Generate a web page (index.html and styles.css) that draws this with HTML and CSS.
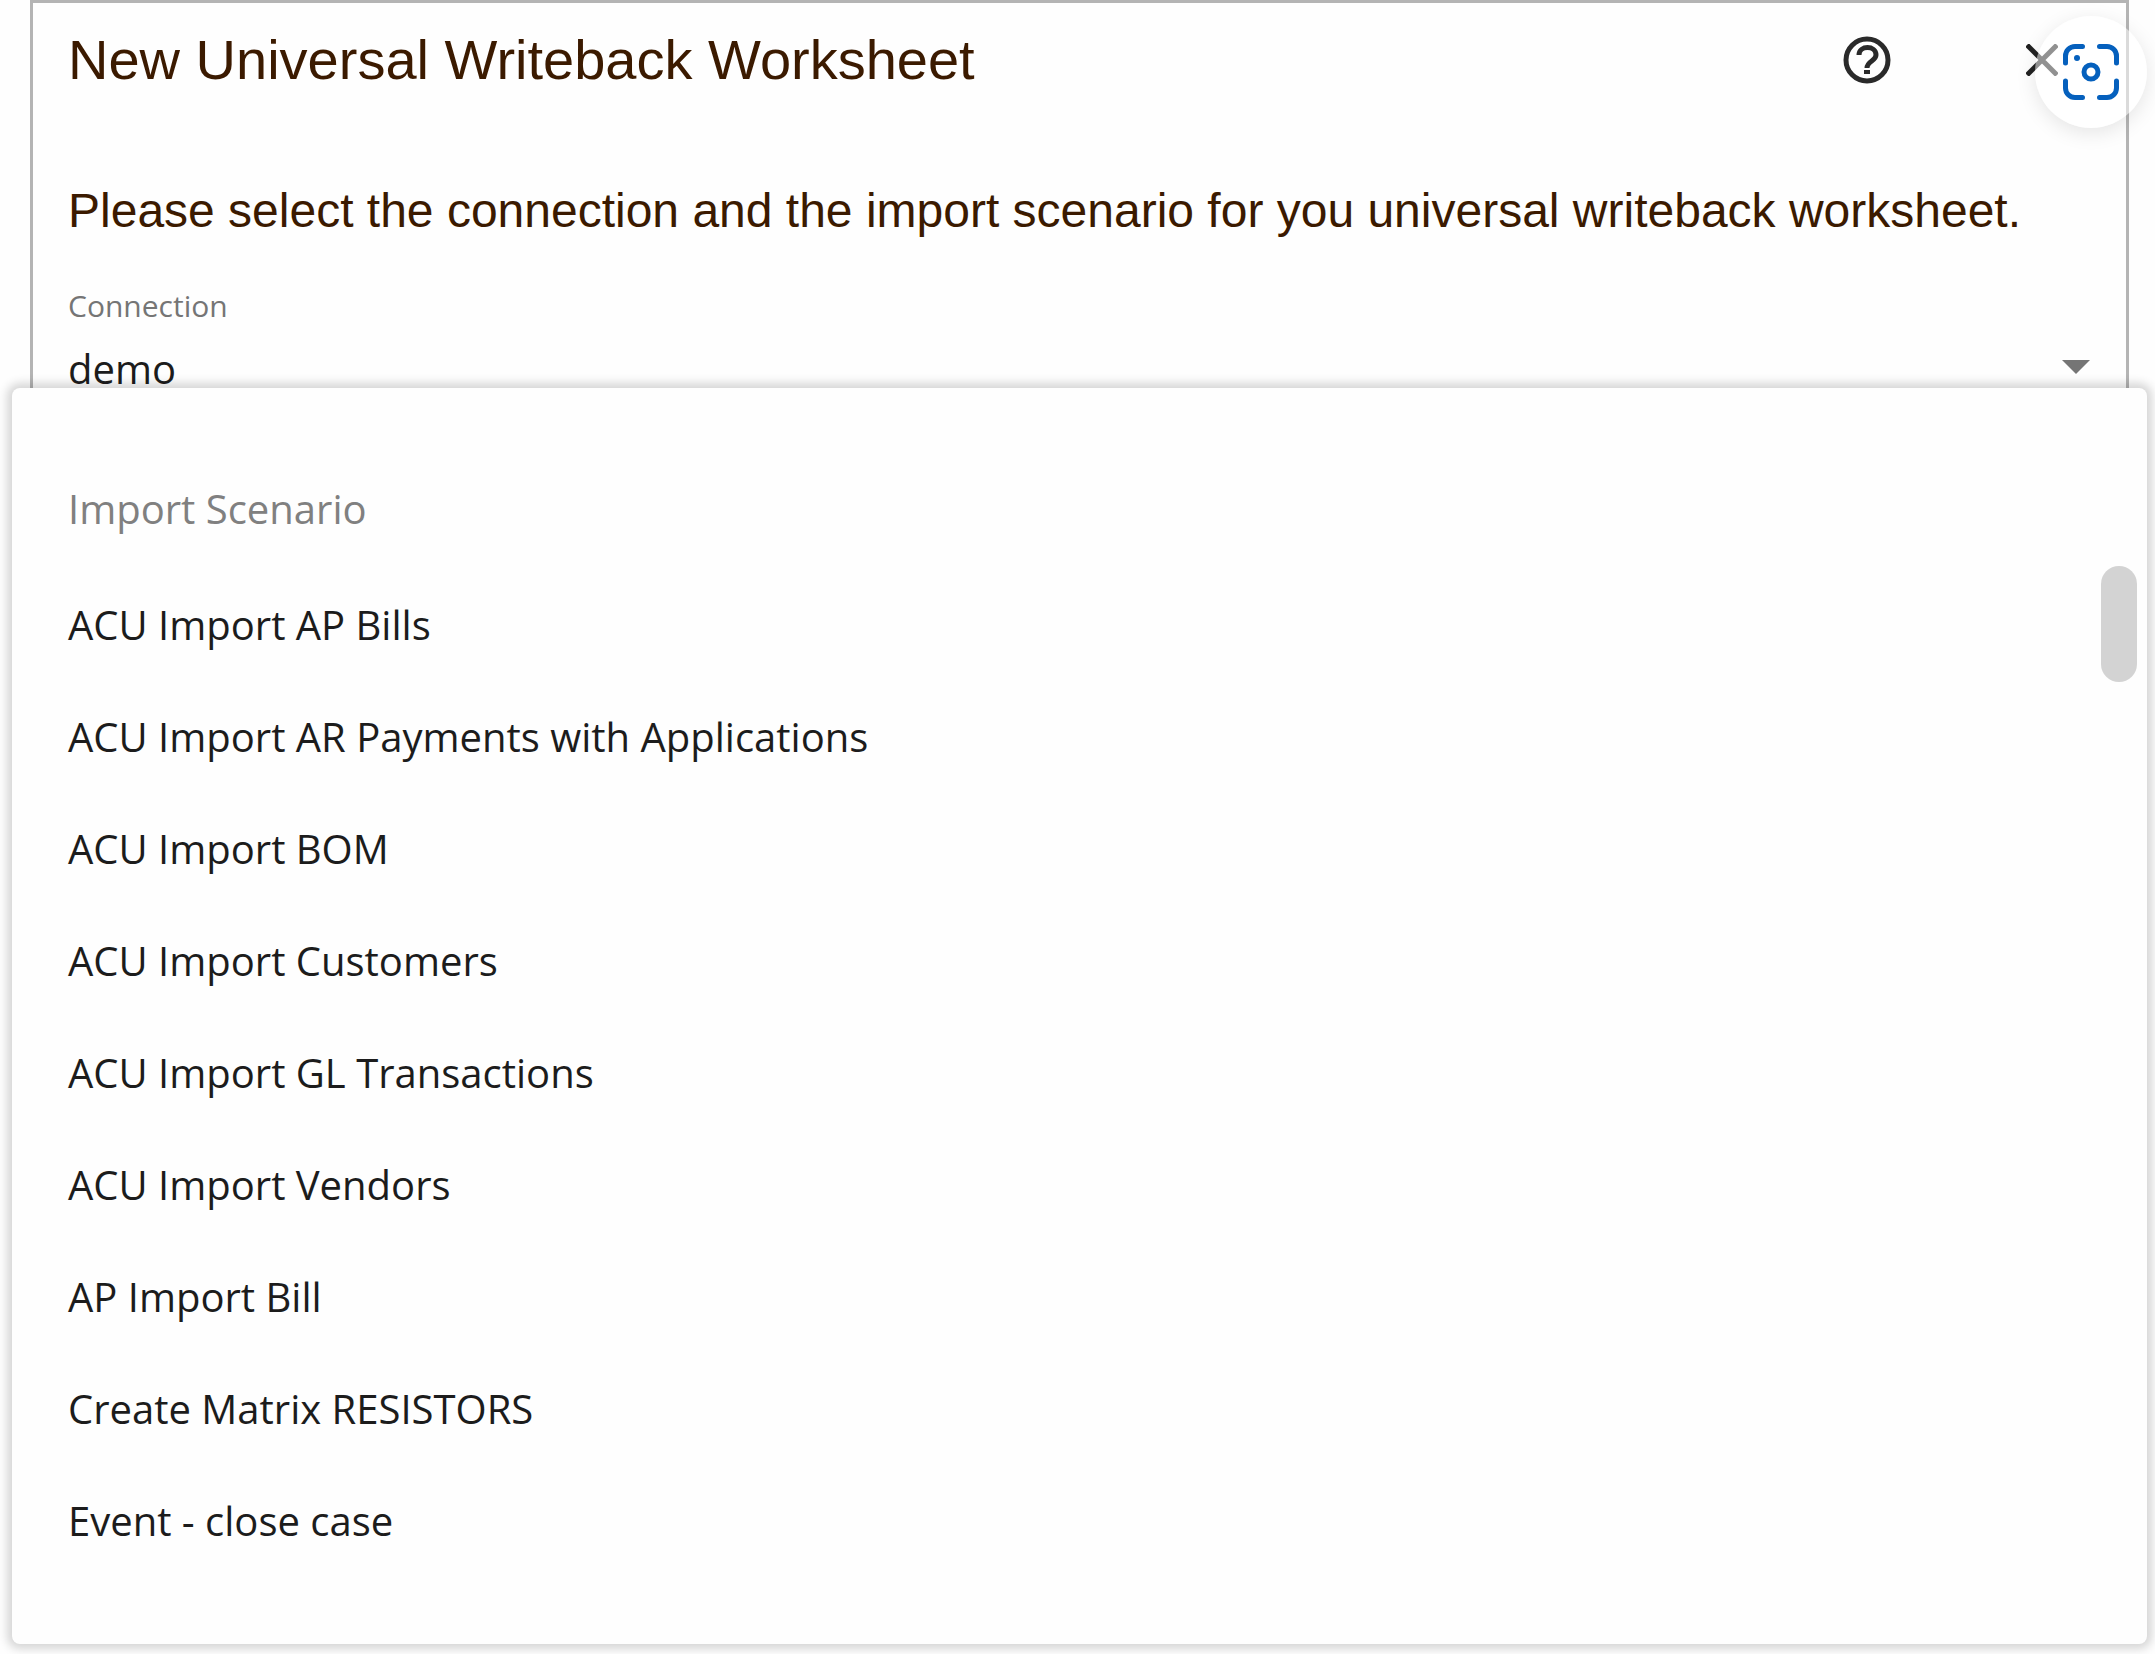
FILE: index.html
```html
<!DOCTYPE html>
<html lang="en">
<head>
    <meta charset="UTF-8">
    <meta name="viewport" content="width=device-width, initial-scale=1.0">
    <title>New Universal Writeback Worksheet</title>
    <link rel="stylesheet" href="styles.css">
</head>
<body>
    <main class="page">
        <form class="dialog">
            <header class="dialog-header">
                <h1>New Universal Writeback Worksheet</h1>
                <button type="button" class="icon-button help" aria-label="Help">
                    <svg viewBox="0 0 48 48" width="48" height="48" fill="none" stroke="#2a2a2a">
                        <circle cx="24" cy="24" r="21" stroke-width="5"/>
                        <path d="M16 19c0-10 17-10 17 0 0 6-9 6-9 13" stroke-width="5"/>
                        <path d="M24 34v4" stroke-width="6"/>
                    </svg>
                </button>
                <button type="button" class="icon-button close" aria-label="Close">
                    <svg viewBox="0 0 32 32" width="32" height="32" fill="none" stroke="#222" stroke-width="5">
                        <path d="M1 1l30 30M31 1L1 31"/>
                    </svg>
                </button>
            </header>
            <p class="intro">Please select the connection and the import scenario for you universal writeback worksheet.</p>
            <label for="connection">Connection</label>
            <div class="select-box">
                <select id="connection" name="connection">
                    <option>demo</option>
                </select>
                <svg class="arrow" viewBox="0 0 28 14" width="28" height="14">
                    <path d="M0 0h28L14 14z" fill="#757575"/>
                </svg>
            </div>
        </form>

        <section class="menu">
            <h2 id="scenarioLabel">Import Scenario</h2>
            <ul class="scenarios" aria-labelledby="scenarioLabel">
                <li><button type="button">ACU Import AP Bills</button></li>
                <li><button type="button">ACU Import AR Payments with Applications</button></li>
                <li><button type="button">ACU Import BOM</button></li>
                <li><button type="button">ACU Import Customers</button></li>
                <li><button type="button">ACU Import GL Transactions</button></li>
                <li><button type="button">ACU Import Vendors</button></li>
                <li><button type="button">AP Import Bill</button></li>
                <li><button type="button">Create Matrix RESISTORS</button></li>
                <li><button type="button">Event - close case</button></li>
            </ul>
            <div class="scroll-thumb"></div>
        </section>

        <!-- visual search button floating over the corner -->
        <button type="button" class="lens" aria-label="Visual search">
            <svg viewBox="0 0 56 56" width="56" height="56" fill="none" stroke="#0560bd" stroke-width="5" stroke-linecap="round">
                <path d="M2.5 19v-7a9.500 9.500 0 0 1 9.500-9.500h7.500M36.500 2.500h7.500a9.500 9.500 0 0 1 9.500 9.500v7M53.500 37v7a9.500 9.500 0 0 1-9.500 9.500h-7.500M19.500 53.500H12a9.500 9.500 0 0 1-9.500-9.500v-7"/>
                <circle cx="28" cy="28" r="7"/>
                <circle cx="14" cy="14" r="3" fill="#0560bd" stroke="none"/>
            </svg>
        </button>
    </main>
</body>
</html>
```
FILE: styles.css
```css
* {
    box-sizing: border-box;
}

body {
    margin: 0;
    background-color: #fefefe;
    font-family: 'Open Sans', 'Noto Sans', sans-serif;
    color: #1c1c1c;
}

button, select {
    font: inherit;
    color: inherit;
    background: none;
    border: none;
    padding: 0;
    cursor: pointer;
}

svg {
    display: block;
}

.page {
    position: relative;
    overflow: hidden;
    padding-bottom: 10px;
}

.dialog {
    margin: 0 26px 0 30px;
    padding: 25px 36px 0 35px;
    border: 3px solid #b4b4b4;
    border-bottom: none;
}

.dialog-header {
    display: flex;
    align-items: center;
    height: 64px;
}

h1, .intro {
    font-family: 'Liberation Sans', Arial, sans-serif;
    font-weight: normal;
    color: #3b1a00;
    margin: 0;
}

h1 {
    flex: 1;
    font-size: 56px;
    line-height: 64px;
}

.help {
    margin-right: 135px;
}

.close {
    margin-right: 32px;
}

.intro {
    margin-top: 91px;
    font-size: 48px;
    line-height: 56px;
}

label {
    display: block;
    margin-top: 47px;
    font-size: 30px;
    line-height: 40px;
    color: #757575;
}

.select-box {
    display: flex;
    align-items: center;
    margin-top: 19px;
}

.arrow {
    margin-bottom: 4px;
}

select {
    flex: 1;
    appearance: none;
    font-size: 40px;
    line-height: 48px;
}

.menu {
    position: relative;
    margin: -5px 8px 0 12px;
    padding: 93px 56px 67px;
    background-color: #fefefe;
    border-radius: 8px;
    box-shadow: 0 0 10px 5px rgba(0, 0, 0, 0.16);
}

h2 {
    margin: 0;
    font-size: 40px;
    font-weight: normal;
    line-height: 56px;
    color: #808080;
}

.scenarios {
    list-style: none;
    margin: 32px 0 0;
    padding: 0;
}

.scenarios button {
    display: block;
    width: 100%;
    font-size: 40px;
    line-height: 112px;
    text-align: left;
}

.scroll-thumb {
    position: absolute;
    top: 178px;
    right: 10px;
    width: 36px;
    height: 116px;
    border-radius: 18px;
    background-color: #d3d3d3;
}

.lens {
    position: absolute;
    top: 16px;
    right: 8px;
    display: flex;
    align-items: center;
    justify-content: center;
    width: 112px;
    height: 112px;
    border-radius: 50%;
    background-color: rgba(255, 255, 255, 0.5);
    box-shadow: 0 5px 20px rgba(0, 0, 0, 0.1);
}
```
